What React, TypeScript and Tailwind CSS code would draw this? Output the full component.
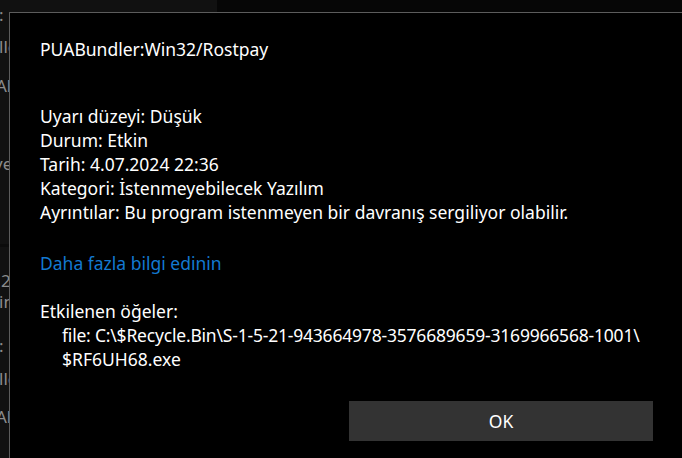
import React from "react";

const bgRows: { top: number; left: number; text: string }[] = [
  { top: 7, left: -1, text: ":" },
  { top: 39, left: -1, text: "llc" },
  { top: 78, left: -4, text: "Al" },
  { top: 156, left: -6, text: "ve" },
  { top: 273, left: 1, text: "2" },
  { top: 294, left: -1, text: "in" },
  { top: 338, left: -1, text: ":" },
  { top: 371, left: -1, text: "llc" },
  { top: 409, left: -4, text: "Al" },
];

export default function App() {
  return (
    <div
      className="relative w-[682px] h-[458px] overflow-hidden bg-[#060606]"
      style={{ fontFamily: '"Noto Sans", "Segoe UI", sans-serif' }}
    >
      {/* background app sidebar */}
      <div className="absolute left-0 top-0 w-[217px] h-full bg-[#111111]">
        <div className="absolute left-0 top-[244px] w-full h-[3px] bg-[#0b0b0b]" />
        {bgRows.map((r) => (
          <div
            key={r.top}
            className="absolute text-[17px] leading-[16px] text-[#8c8c8c] whitespace-nowrap"
            style={{ top: r.top, left: r.left }}
          >
            {r.text}
          </div>
        ))}
      </div>

      {/* dialog */}
      <div className="absolute left-[9px] top-[12px] w-[700px] h-[470px] bg-black border border-[#5c5c5c] text-white text-[17.5px] leading-[24px]">
        <div className="pl-[30px] pt-[24px] w-[673px]">
          <div className="leading-[24px]">PUABundler:Win32/Rostpay</div>
          <div className="mt-[43px] flex flex-col">
            <div>Uyarı düzeyi: Düşük</div>
            <div>Durum: Etkin</div>
            <div>Tarih: 4.07.2024 22:36</div>
            <div>Kategori: İstenmeyebilecek Yazılım</div>
            <div>Ayrıntılar: Bu program istenmeyen bir davranış sergiliyor olabilir.</div>
          </div>
          <div className="mt-[27px] text-[#1379d1]">Daha fazla bilgi edinin</div>
          <div className="mt-[24px]">Etkilenen öğeler:</div>
          <div className="pl-[22px]">
            <div className="whitespace-nowrap tracking-[-0.2px]">file: C:\$Recycle.Bin\S-1-5-21-943664978-3576689659-3169966568-1001\</div>
            <div>$RF6UH68.exe</div>
          </div>
          <div className="mt-[30px] flex justify-end pr-[30px]">
            <button className="w-[304px] h-[40px] bg-[#333333] text-white text-[17.5px]">
              OK
            </button>
          </div>
        </div>
      </div>
    </div>
  );
}
